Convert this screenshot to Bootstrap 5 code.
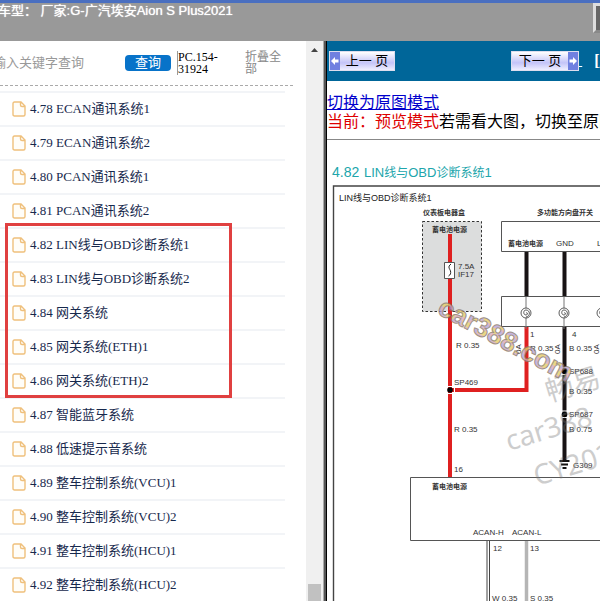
<!DOCTYPE html>
<html lang="zh-CN">
<head>
<meta charset="utf-8">
<meta name="viewport" content="width=device-width, initial-scale=1">
<title>Aion S Plus2021</title>
<link href="https://cdn.jsdelivr.net/npm/bootstrap@5.3.0/dist/css/bootstrap.min.css" rel="stylesheet">
<style>
body{font-family:"Liberation Serif","Noto Sans CJK SC",serif;font-size:13px;line-height:16px;color:#000;background:#fff}
.titlebar{height:41px;background:#999;border-top:3px solid #4a6fc0;color:#fff;font-family:"Liberation Sans","Noto Sans CJK SC",sans-serif}
.titlebar h1{font-size:13px;line-height:16px;font-weight:400;text-shadow:0 0 1px #fff;margin-left:-2px}
.winbtn{width:40px;height:30px;margin-right:-33px;background:#666;border:3px outset #ddd}
.side{flex:0 0 306px}
.searchbar{height:45px;width:293px;border-bottom:1px dashed #aaa}
.searchbar input{width:132px;margin-left:-7px;font-size:13px;color:#333}
.searchbar input::placeholder{color:#999;opacity:1}
.query{width:46px;height:16px;background:#0873c9;color:#fff;border-radius:4px;font-size:13px;line-height:14px}
.code{width:48px;margin-left:6px;font-size:12px;line-height:12px;border-left:1px solid #999}
.fold{width:40px;margin-left:20px;font-size:12px;line-height:12px;color:#888}
.chapters{width:285px;margin-top:5px;border-top:2px solid #f2f4f7}
.chapters a{height:34px;padding-left:12px;gap:4px;color:#17294d;border-bottom:2px solid #f2f4f7}
.marked::after{content:"";position:absolute;inset:-6px 53px 1px 5px;border:3px solid #e04040;pointer-events:none}
.scroll{flex:0 0 17px;background:#f0f0f0}
.thumb{width:13px;height:17px;background:#c1c1c1}
.split{flex:0 0 4px;background:linear-gradient(90deg,#aaa 0 1px,#555 1px 3px,#000 3px)}
.pager{height:40px;background:#069;padding-left:2px;font-size:13px}
.pager button{height:20px;background:linear-gradient(#fff,#c4c4f8 60%,#eef);border:1px solid #dde;font-family:"Liberation Sans","Noto Sans CJK SC",sans-serif;font-size:13px;line-height:16px;color:#000}
.prev{width:66px}.next{width:68px;margin-left:116px}
.prev span,.next span{white-space:pre}
.pager svg{width:10px;height:18px;flex:none}
.mode{font-size:16px;line-height:19px;padding-top:12px;height:58px}
.mode a{color:#00c}.now{color:#d00}
.sheet{border-top:1px solid #888}
.sheet text{font-family:"Liberation Sans","Noto Sans CJK SC",sans-serif;font-size:8px;fill:#333}
.sheet .zh{font-size:7px;font-weight:700}
.sheet .head{font-size:13px;fill:#20a5ab}
.sheet .headnum{font-size:14px}
.sheet .headzh{font-size:12px}
.sheet .sub{font-size:9px;fill:#222}
.sheet .ghost{font-family:"Noto Sans","Noto Sans CJK SC",sans-serif;font-size:28px;fill:#777;opacity:.36}
.sheet .brand{font-size:27px;font-weight:700;fill:url(#rainbow);stroke:#876;stroke-width:1px;opacity:.8}
</style>
<script src="https://cdn.jsdelivr.net/npm/bootstrap@5.3.0/dist/js/bootstrap.bundle.min.js"></script>
</head>
<body class="vh-100 overflow-hidden d-flex flex-column">
<svg class="d-none" aria-hidden="true"><symbol id="page" viewBox="0 0 14 16"><path d="M2.500 1H9l4 4v8.500q0 1.500-1.500 1.500h-9Q1 15 1 13.500v-11Q1 1 2.500 1ZM8.500 1v3q0 1.500 1.500 1.500h3" fill="#fffdf8" stroke="#efc07c" stroke-width="1.400"/></symbol></svg>
<header class="titlebar d-flex flex-shrink-0 align-items-start justify-content-between overflow-hidden">
<h1 class="mb-0 text-nowrap">车型： 厂家:G-广汽埃安Aion S Plus2021</h1>
<button class="winbtn flex-shrink-0 p-0" aria-label="窗口"></button>
</header>
<div class="d-flex flex-grow-1 overflow-hidden">
<aside class="side overflow-hidden">
<form class="searchbar d-flex align-items-center" onsubmit="return false">
<input class="border-0 p-0 bg-transparent flex-shrink-0" type="text" placeholder="输入关键字查询" aria-label="输入关键字查询">
<button class="query border-0 p-0 flex-shrink-0">查询</button>
<div class="code flex-shrink-0">PC.154-31924</div>
<button type="button" class="fold border-0 p-0 bg-transparent text-start">折叠全部</button>
</form>
<nav class="chapters">
<a href="#" class="d-flex align-items-center text-decoration-none"><svg width="14" height="16"><use href="#page"/></svg>4.78 ECAN通讯系统1</a>
<a href="#" class="d-flex align-items-center text-decoration-none"><svg width="14" height="16"><use href="#page"/></svg>4.79 ECAN通讯系统2</a>
<a href="#" class="d-flex align-items-center text-decoration-none"><svg width="14" height="16"><use href="#page"/></svg>4.80 PCAN通讯系统1</a>
<a href="#" class="d-flex align-items-center text-decoration-none"><svg width="14" height="16"><use href="#page"/></svg>4.81 PCAN通讯系统2</a>
<div class="marked position-relative">
<a href="#" class="d-flex align-items-center text-decoration-none"><svg width="14" height="16"><use href="#page"/></svg>4.82 LIN线与OBD诊断系统1</a>
<a href="#" class="d-flex align-items-center text-decoration-none"><svg width="14" height="16"><use href="#page"/></svg>4.83 LIN线与OBD诊断系统2</a>
<a href="#" class="d-flex align-items-center text-decoration-none"><svg width="14" height="16"><use href="#page"/></svg>4.84 网关系统</a>
<a href="#" class="d-flex align-items-center text-decoration-none"><svg width="14" height="16"><use href="#page"/></svg>4.85 网关系统(ETH)1</a>
<a href="#" class="d-flex align-items-center text-decoration-none"><svg width="14" height="16"><use href="#page"/></svg>4.86 网关系统(ETH)2</a>
</div>
<a href="#" class="d-flex align-items-center text-decoration-none"><svg width="14" height="16"><use href="#page"/></svg>4.87 智能蓝牙系统</a>
<a href="#" class="d-flex align-items-center text-decoration-none"><svg width="14" height="16"><use href="#page"/></svg>4.88 低速提示音系统</a>
<a href="#" class="d-flex align-items-center text-decoration-none"><svg width="14" height="16"><use href="#page"/></svg>4.89 整车控制系统(VCU)1</a>
<a href="#" class="d-flex align-items-center text-decoration-none"><svg width="14" height="16"><use href="#page"/></svg>4.90 整车控制系统(VCU)2</a>
<a href="#" class="d-flex align-items-center text-decoration-none"><svg width="14" height="16"><use href="#page"/></svg>4.91 整车控制系统(HCU)1</a>
<a href="#" class="d-flex align-items-center text-decoration-none"><svg width="14" height="16"><use href="#page"/></svg>4.92 整车控制系统(HCU)2</a>
</nav>
</aside>
<div class="scroll d-flex flex-column justify-content-between align-items-center" aria-hidden="true">
<svg width="17" height="18"><path d="M5 11h7l-3.500-4Z" fill="#444"/></svg>
<div class="thumb"></div>
</div>
<div class="split"></div>
<main class="flex-grow-1 overflow-hidden">
<div class="pager d-flex align-items-center text-nowrap">
<button class="prev p-0 d-flex align-items-center flex-shrink-0"><svg viewBox="0 0 10 18"><path d="M0 0h10v18H0Z" fill="#7080e0"/><path d="M1 9 5 5v2.500h3.500v3H5V13Z" fill="#fff"/></svg><span class="flex-grow-1 text-center">上一 页</span></button>
<button class="next p-0 d-flex align-items-center flex-shrink-0"><span class="flex-grow-1 text-center">下一 页</span><svg viewBox="0 0 10 18"><path d="M0 0h10v18H0Z" fill="#7080e0"/><path d="M9 9 5 5v2.500H1.500v3H5V13Z" fill="#fff"/></svg></button>
<a href="#" class="text-white" aria-label="下一页">&nbsp;</a>
<a href="#" class="text-white fw-bold fs-6 ms-2 ps-1 text-decoration-none">[<span class="text-decoration-underline">原图</span>]</a>
</div>
<div class="mode text-nowrap"><a href="#">切换为原图模式</a><br><span class="now">当前：预览模式</span>若需看大图，切换至原图模式</div>
<div class="sheet">
<svg class="d-block" width="473" height="461" viewBox="327 140 473 461" role="img" aria-label="LIN线与OBD诊断系统1">
<defs><pattern id="rainbow" width="18" height="14" patternUnits="userSpaceOnUse"><path d="M0 0h18v14H0Z" fill="#d9a8b8"/><path d="M0 0h9v5H0ZM9 7h9v5H9Z" fill="#e4cd68"/><path d="M9 0h9v4H9ZM0 9h9v4H0Z" fill="#b6a3d8"/></pattern>
<g id="twist" fill="none" stroke="#333"><path d="M0-16V16" stroke="#777"/><circle r="5" fill="#fff" stroke-width=".8"/><path d="M0 0c2-1 2 2 0 2-3 0-3-5 0-5 4 0 5 6 0 7" stroke-width=".8"/></g></defs>
<path d="M800 186H333.500V601" fill="none" stroke="#444" stroke-width="1.400"/>
<text class="head headnum" x="332" y="177">4.82</text>
<text class="head" x="364" y="177">LIN<tspan class="headzh">线与</tspan>OBD<tspan class="headzh">诊断系统</tspan>1</text>
<text class="sub" x="339" y="201">LIN线与OBD诊断系统1</text>
<text class="zh" x="423" y="215">仪表板电器盒</text>
<text class="zh" x="537" y="215">多功能方向盘开关</text>
<path d="M422.500 221.500H481.500V311.500H422.500Z" fill="#dcdddd" stroke="#333" stroke-dasharray="2.500 2"/>
<text class="zh" x="432" y="232">蓄电池电源</text>
<path d="M450 234V477M450 390H526.500V327" fill="none" stroke="#df2020" stroke-width="4"/>
<path d="M444.500 262.500h10v16h-10Z" fill="#fff" stroke="#555"/>
<path d="M451 264c-4 3-1 5-.5 7s0 4-2 5" fill="none" stroke="#222"/>
<text x="458" y="269">7.5A</text><text x="458" y="277">IF17</text>
<path d="M800 221.500H501.500v30H800M800 296.500H501.500v30H800" fill="none" stroke="#555"/>
<text class="zh" x="508" y="246">蓄电池电源</text><text x="556" y="246">GND</text><text x="597" y="246">LIN</text>
<path d="M526.500 252V296M564.500 252V296M564.500 327V460" stroke="#181314" stroke-width="4"/>
<use href="#twist" x="526" y="313"/><use href="#twist" x="564" y="313"/><use href="#twist" x="602" y="313"/>
<text x="530" y="337">1</text><text x="572" y="337">4</text>
<text x="456" y="348">R 0.35</text><text x="530" y="351">R 0.35</text><text x="569" y="351">B 0.35</text>
<text transform="translate(521 354) rotate(-90)">0A</text><text transform="translate(560 354) rotate(-90)">0A</text><text transform="translate(599 354) rotate(-90)">0A</text>
<path d="M446 386.500h8M446 393.500h8M454.500 387v7M561 367.500h8M561 374.500h8M561 411h8M561 417.500h8" stroke="#fff"/>
<circle cx="450" cy="390" r="2.800"/><circle cx="564.500" cy="371" r="2.800"/><circle cx="564.500" cy="414.500" r="2.800"/>
<text x="454" y="385">SP469</text><text x="569" y="374">SP688</text><text x="569" y="394">B 0.35</text><text x="569" y="417">SP687</text><text x="569" y="432">B 0.75</text><text x="573" y="468">G309</text>
<path d="M559.500 461h10M561 464.500h7M562.500 468h4" stroke="#111" stroke-width="2"/>
<text x="454" y="432">R 0.35</text><text x="454" y="472">16</text>
<path d="M800 477.500H410.500v63H800" fill="none" stroke="#555"/>
<text class="zh" x="432" y="489">蓄电池电源</text><text x="473" y="535">ACAN-H</text><text x="512" y="535">ACAN-L</text>
<path d="M487 541V601M489.500 541V601" stroke="#444"/><path d="M526.500 541V601" stroke="#b5b5b5" stroke-width="3.500"/>
<text x="493" y="551">12</text><text x="530" y="551">13</text><text x="492" y="601">W 0.35</text><text x="530" y="601">S 0.35</text>
<text class="ghost" transform="translate(549 402) rotate(-17)">畅易</text>
<text class="ghost" transform="translate(509 451) rotate(-17)">car388</text>
<text class="ghost" transform="translate(537 486) rotate(-17)">CY2021</text>
<text class="brand" transform="translate(436 313) rotate(28)">car388.com</text>
</svg>
</div>
</main>
</div>
</body>
</html>
